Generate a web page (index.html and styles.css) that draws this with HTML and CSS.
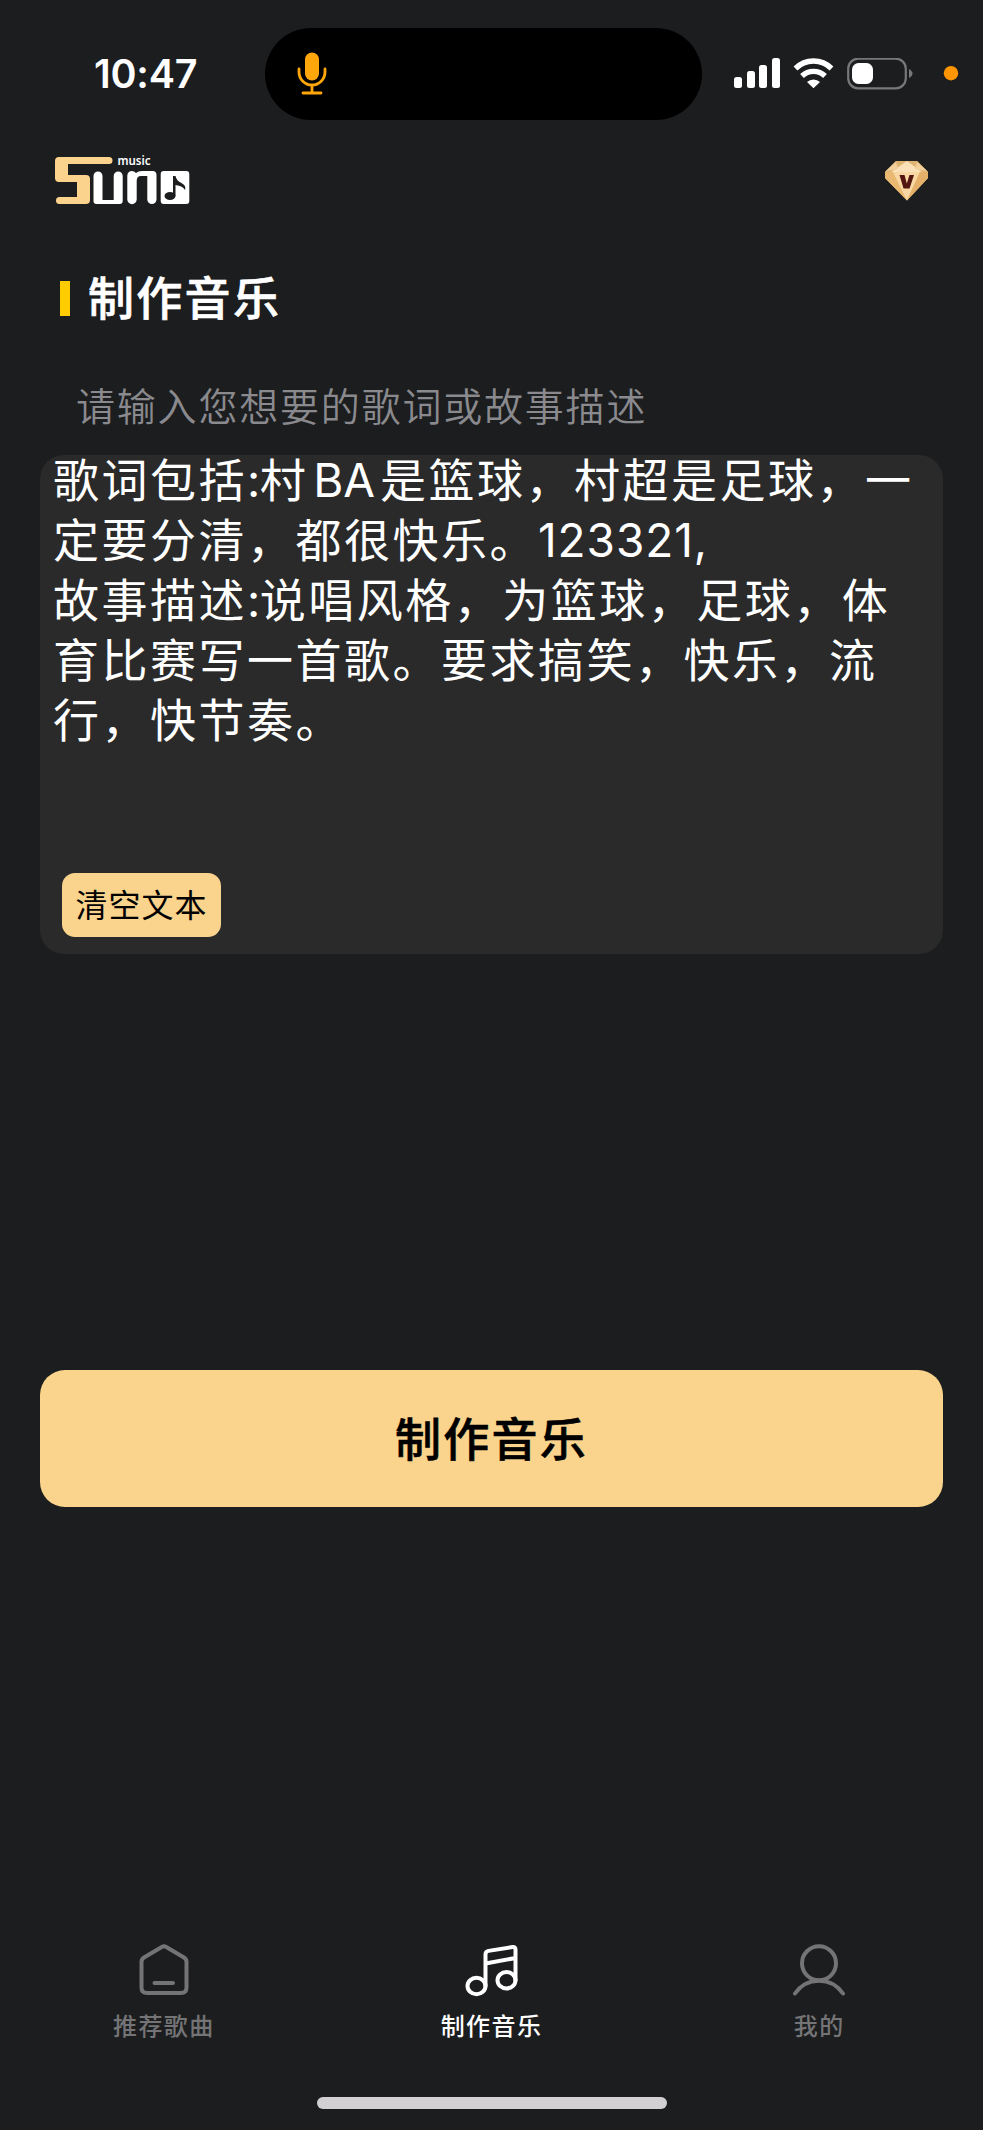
FILE: index.html
```html
<!DOCTYPE html>
<html lang="zh-CN">
<head>
<meta charset="utf-8">
<title>制作音乐</title>
<link rel="stylesheet" href="styles.css">
</head>
<body>
<div class="app">
  <header class="status">
    <time class="clock">10:47</time>
    <div class="island">
      <svg class="mic" viewBox="0 0 30 44" width="30" height="44"><rect x="8" y="0.500" width="14" height="28" rx="7" fill="#ffa60a"/><path d="M2 17v3a13 13 0 0 0 26 0v-3M15 33v7M6 41h18" fill="none" stroke="#ffa60a" stroke-width="2.800" stroke-linecap="round"/></svg>
    </div>
    <svg class="signals" viewBox="0 0 240 34" width="240" height="34">
      <g fill="#fff"><rect x="1" y="19" width="8" height="11" rx="2.500"/><rect x="14" y="13" width="8" height="17" rx="2.500"/><rect x="26" y="7" width="8" height="23" rx="2.500"/><rect x="39" y="0" width="8" height="30" rx="2.500"/></g>
      <g fill="none" stroke="#fff" stroke-width="5.400"><path d="M62.500 10.500a25.500 25.500 0 0 1 36 0"/><path d="M69 18a16.500 16.500 0 0 1 23 0"/></g>
      <path d="M80.500 30.300 74 24a9.500 9.500 0 0 1 13 0z" fill="#fff"/>
      <rect x="115.200" y="0.700" width="57.600" height="29.600" rx="10" fill="none" stroke="#77787a" stroke-width="2.200"/>
      <rect x="119" y="5" width="21" height="21" rx="6.500" fill="#fff"/>
      <path d="M176 11q3.500 2 3.500 4.500t-3.500 4.500z" fill="#77787a"/>
      <circle cx="218" cy="15.200" r="7.200" fill="#ff9500"/>
    </svg>
  </header>
  <div class="brand-row">
    <svg class="logo" viewBox="0 0 138 52" width="138" height="52">
      <path d="M5 1H55A3.500 3.500 0 0 1 55 8H14V19H32Q36 19 36 23V44Q36 48 32 48H5.500A3.500 3.500 0 0 1 5.500 41H23V26H5Q1 26 1 22V5Q1 1 5 1Z" fill="#fbd38d"/>
      <path d="M39.500 20A4.500 4.500 0 0 1 48.500 20V44H59.700V20A4.500 4.500 0 0 1 68.700 20V45Q68.700 48 65.700 48H42.500Q39.500 48 39.500 45Z" fill="#fff"/>
      <path d="M73.300 19.500A4.500 4.500 0 0 1 80 15.500L82 17Q84 15 88 15H98.500Q102.500 15 102.500 19V43.500A4.600 4.600 0 0 1 93.300 43.500V20H87Q82.700 20 82.700 25V43.500A4.700 4.700 0 0 1 73.300 43.500Z" fill="#fff"/>
      <rect x="106.700" y="15" width="28.600" height="33" rx="3" fill="#fff"/>
      <g fill="#1c1d1f"><ellipse cx="116" cy="40" rx="5.500" ry="4"/><path d="M119 20h2.500q1 5 6 7 5 2.500 3.500 7-2-4-9.500-5v11H119z"/></g>
      <text x="63.500" y="9" class="logo-word" textLength="33" lengthAdjust="spacingAndGlyphs">music</text>
    </svg>
    <svg class="gem" viewBox="0 0 44 40" width="44" height="40">
      <path d="M11 0h21l11 11v6L22 39.500 0 17v-6z" fill="#eabf7b"/>
      <path d="M11 0h21l11 11H0z" fill="#deb36f"/><path d="m22 0 15 11H6z" fill="#fae1b8"/>
      <path d="M0 11h8l14 28.500L0 17z" fill="#e9b971"/><path d="M8 11h27L22 39.500z" fill="#f8d7a3"/><path d="m35 11-13 28.500L43 17v-6z" fill="#e5b16a"/>
      <path d="m1 10 10-9 2 7zM42 10 32 1l-2 7z" fill="#f3d09b"/>
      <path d="M14.500 14h5l2.300 8.500 2.700-8.500h4.500l-4.500 13.500h-6z" fill="#53150f"/>
    </svg>
  </div>
  <main class="content">
    <h1 class="title">制作音乐</h1>
    <p class="hint">请输入您想要的歌词或故事描述</p>
    <section class="editor">
      <div class="lyrics"><div class="line">歌词包括<span class="colon">:</span>村<span class="latin">BA</span>是篮球，村超是足球，一</div><div class="line">定要分清，都很快乐。<span class="digits">123321,</span></div><div class="line">故事描述<span class="colon">:</span>说唱风格，为篮球，足球，体</div><div class="line">育比赛写一首歌。要求搞笑，快乐，流</div><div class="line">行，快节奏。</div></div>
      <button class="clear">清空文本</button>
    </section>
    <button class="create">制作音乐</button>
  </main>
  <nav class="tabs">
    <a class="tab"><svg viewBox="0 0 54 54" width="54" height="54"><path d="M24.800 5q2.200-1.300 4.400 0L47 15.500Q49.500 17 49.500 20V45.500q0 5.500-5.500 5.500H10q-5.500 0-5.500-5.500V20Q4.500 17 7 15.500z"/><path d="M17.500 41H36"/></svg><span>推荐歌曲</span></a>
    <a class="tab active"><svg viewBox="0 0 54 56" width="54" height="56"><ellipse cx="11.500" cy="44" rx="9" ry="8.200"/><ellipse cx="41.500" cy="38.200" rx="9" ry="8.200"/><path d="M20.500 44V12.500q0-3 3-3.600L47.500 5q3-.5 3 2.600v30.600M20.500 21.500l30-5.500"/></svg><span>制作音乐</span></a>
    <a class="tab"><svg viewBox="0 0 54 54" width="54" height="54"><circle cx="27" cy="21.300" r="17"/><path d="M3 51.500a28.900 28.900 0 0 1 48 0"/></svg><span>我的</span></a>
  </nav>
  <div class="home-bar"></div>
</div>
</body>
</html>
```
FILE: styles.css
```css
* { box-sizing: border-box; }
body { margin: 0; background: #1c1d1f; color: #fff; font-family: Inter, "Noto Sans CJK SC", sans-serif; }
button { border: 0; margin: 0; padding: 0; font-family: inherit; background: #fad38c; color: #000; }
.app { width: 983px; height: 2130px; display: flex; flex-direction: column; overflow: hidden; }
.status { height: 120px; padding-top: 28px; display: flex; flex: none; }
.clock { width: 265px; padding-left: 94px; font-size: 39.500px; font-weight: 600; line-height: 92px; letter-spacing: -0.200px; }
.island { width: 437px; height: 92px; border-radius: 46px; background: #000; padding: 24px 0 0 32px; }
.island svg { display: block; }
.signals { margin: 30px 0 0 31px; }
.brand-row { height: 120px; flex: none; display: flex; justify-content: space-between; padding: 36px 54px 0 54px; }
.logo { overflow: visible; }
.gem { margin-top: 5px; }
.logo-word { font: 600 13px/1.500 "Noto Sans", sans-serif; fill: #fff; }
.content { padding: 0 40px; display: flex; flex-direction: column; }
.title { margin: 23px 0 0 20px; display: flex; align-items: center; gap: 18px; height: 70px; font-size: 46px; line-height: 70px; letter-spacing: 2.300px; font-weight: 500; -webkit-text-stroke: 0.600px currentColor; }
.title::before { content: ""; width: 10px; height: 35px; margin-top: 1px; background: #ffcc00; }
.hint { margin: 44px 0 0 36px; height: 60px; line-height: 60px; font-size: 39px; letter-spacing: 1.800px; color: #8a8a8e; font-weight: 350; }
.editor { height: 499px; margin-top: 18px; border-radius: 24px; background: #2a2a2a; padding: 0 13px 17px; display: flex; flex-direction: column; justify-content: space-between; align-items: flex-start; }
.lyrics { margin-top: -5px; font-size: 46px; line-height: 60px; letter-spacing: 2.500px; white-space: nowrap; font-weight: 400; }
.line { height: 60px; }
.colon { letter-spacing: -0.500px; }
.latin { margin: 0 5px 0 5px; letter-spacing: 0; }
.digits { letter-spacing: 0.900px; }
.clear { width: 159px; height: 64px; margin-left: 9px; padding-bottom: 4px; border-radius: 13px; font-size: 32px; letter-spacing: 1px; }
.create { height: 137px; margin-top: 416px; padding-bottom: 6px; border-radius: 25px; font-size: 46px; font-weight: 500; letter-spacing: 2.300px; -webkit-text-stroke: 0.600px currentColor; }
.tabs { margin-top: auto; display: flex; height: 155px; }
.tab { flex: 1; display: flex; flex-direction: column; align-items: center; justify-content: space-between; color: #747476; font-size: 24px; line-height: 36px; letter-spacing: 1.400px; padding-bottom: 52px; font-weight: 500; }
.tab svg { flex: none; fill: none; stroke: currentColor; stroke-width: 4; stroke-linecap: round; stroke-linejoin: round; }
.tab.active { color: #fff; }
.home-bar { flex: none; width: 350px; height: 12px; margin: 0 auto 21px 317px; border-radius: 6px; background: #d2d0d3; }
```
